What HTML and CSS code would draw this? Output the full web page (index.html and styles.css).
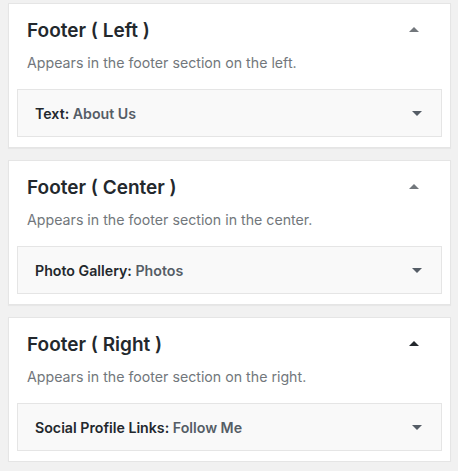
FILE: index.html
```html
<!DOCTYPE html>
<html>
<head>
<meta charset="utf-8">
<link rel="stylesheet" href="styles.css">
</head>
<body>
<div class="list">
  <section class="panel">
    <div class="head">
      <h3 class="title">Footer ( Left )</h3>
      <span class="arrow up"></span>
    </div>
    <p class="desc">Appears in the footer section on the left.</p>
    <div class="widget">
      <span class="wname">Text:<span class="wsub"> About Us</span></span>
      <span class="arrow down"></span>
    </div>
  </section>
  <section class="panel">
    <div class="head">
      <h3 class="title">Footer ( Center )</h3>
      <span class="arrow up"></span>
    </div>
    <p class="desc">Appears in the footer section in the center.</p>
    <div class="widget">
      <span class="wname">Photo Gallery:<span class="wsub"> Photos</span></span>
      <span class="arrow down"></span>
    </div>
  </section>
  <section class="panel">
    <div class="head">
      <h3 class="title">Footer ( Right )</h3>
      <span class="arrow up dark"></span>
    </div>
    <p class="desc">Appears in the footer section on the right.</p>
    <div class="widget">
      <span class="wname">Social Profile Links:<span class="wsub"> Follow Me</span></span>
      <span class="arrow down"></span>
    </div>
  </section>
</div>
</body>
</html>
```

FILE: styles.css
```css
html, body {
  margin: 0;
  padding: 0;
  background: #f1f1f1;
}
body {
  font-family: Inter, "Liberation Sans", Arial, sans-serif;
}
.list {
  display: flex;
  flex-direction: column;
  gap: 12px;
  padding: 3px 7px 0 8px;
}
.panel {
  background: #fff;
  border: 1px solid #e5e5e5;
  box-shadow: 0 1px 1px rgba(0,0,0,.04);
  padding: 0 8px 10px 8px;
  box-sizing: border-box;
  height: 145px;
}
.head {
  display: flex;
  justify-content: space-between;
  align-items: center;
  padding: 15px 23px 0 10px;
}
.title {
  margin: 0;
  font-size: 19px;
  line-height: 24px;
  font-weight: 600;
  color: #23282d;
}
.arrow {
  width: 0;
  height: 0;
  border-left: 5px solid transparent;
  border-right: 5px solid transparent;
}
.arrow.up {
  border-bottom: 5px solid #72777c;
  margin-top: -4px;
}
.arrow.up.dark {
  border-bottom-color: #23282d;
}
.arrow.down {
  border-top: 5px solid #555d66;
}
.desc {
  margin: 10px 0 0 10px;
  font-size: 14.2px;
  line-height: 20px;
  color: #72777c;
}
.widget {
  margin-top: 16px;
  height: 48px;
  box-sizing: border-box;
  border: 1px solid #e5e5e5;
  background: #f9f9f9;
  display: flex;
  align-items: center;
  justify-content: space-between;
  padding: 0 19px 0 17px;
}
.wname {
  font-size: 14.2px;
  font-weight: 600;
  color: #23282d;
}
.wsub {
  color: #555d66;
}
```
